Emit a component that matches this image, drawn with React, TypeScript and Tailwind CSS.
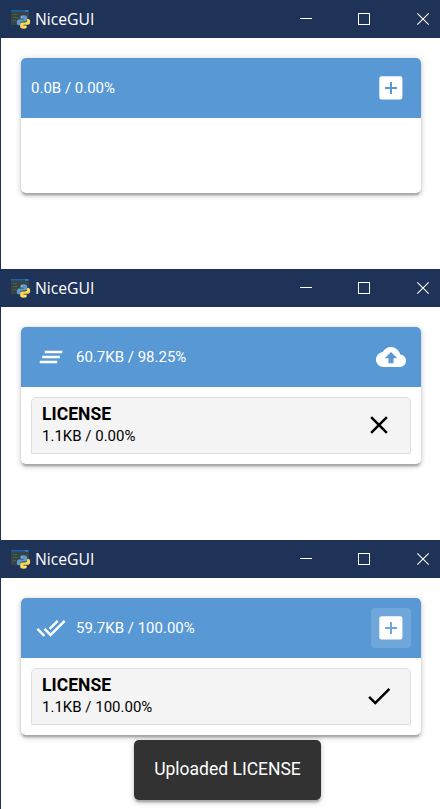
import type { ReactNode } from 'react';
import { MdClear, MdClearAll, MdCloudUpload, MdDone, MdDoneAll } from 'react-icons/md';

function AppIcon() {
  return (
    <svg width="20" height="20" viewBox="0 0 20 20" className="block shrink-0">
      <rect x="0" y="1" width="18" height="15" fill="#3b4245" />
      <rect x="0" y="1" width="18" height="1.500" fill="#0967b1" />
      <path d="M14 2h3" stroke="#5b9bd0" strokeWidth="0.8" />
      <path d="M2 5.500h4M2 8.500h5M2 11.500h3" stroke="#356b42" strokeWidth="1" />
      <path
        d="M12.400 6.300c-2.700 0-3 .9-3 2v1.400h3.300v.7H8.100c-1.400 0-2.300 1-2.300 3s.8 2.900 2 2.900h1.400v-1.700c0-1.200 1-2.100 2.100-2.100h3.100c1 0 1.700-.8 1.700-1.700V8.300c0-1.200-1.100-2-3.700-2z"
        fill="#5b9bcd"
      />
      <path
        d="M12.700 19.800c2.700 0 3-.9 3-2v-1.400h-3.300v-.7h4.600c1.400 0 2.200-1 2.200-3s-.8-2.700-2-2.700h-1.100v1.600c0 1.200-.9 2-2 2h-3.100c-1 0-1.800.8-1.800 1.800v2.400c0 1.200 1 2 3.500 2z"
        fill="#fddc55"
      />
      <circle cx="10.900" cy="8" r="0.500" fill="#fff" />
      <circle cx="14.200" cy="18" r="0.500" fill="#fff" />
    </svg>
  );
}

function AddBoxIcon() {
  return (
    <svg width="30" height="30" viewBox="0 0 30 30" className="block">
      <path
        fill="currentColor"
        fillRule="evenodd"
        d="M5.500 3.300h18.700a2.200 2.200 0 0 1 2.200 2.200v18.700a2.200 2.200 0 0 1-2.200 2.200H5.500a2.200 2.200 0 0 1-2.200-2.200V5.500a2.200 2.200 0 0 1 2.200-2.200zM14 9v5H9v2h5v5h2v-5h5v-2h-5V9z"
      />
    </svg>
  );
}

function TitleBar() {
  return (
    <div className="flex h-[38px] items-center bg-[#1f3258] pl-[11px] text-white">
      <AppIcon />
      <span className="ml-1 font-['Open_Sans','Noto_Sans',sans-serif] text-[15.700px] leading-5">NiceGUI</span>
      <svg width="130" height="14" viewBox="0 0 130 14" fill="none" stroke="#fff" className="ml-auto mr-[10px] shrink-0">
        <path d="M0 6.500h12" shapeRendering="crispEdges" />
        <rect x="58.500" y="1.500" width="11" height="11" shapeRendering="crispEdges" />
        <path d="M117.300 1.300l11.400 11.400M128.700 1.300L117.300 12.700" strokeWidth="1.100" />
      </svg>
    </div>
  );
}

function Uploader({ lead, label, action, children }: { lead?: ReactNode; label: string; action: ReactNode; children: ReactNode }) {
  return (
    <div className="w-[400px] overflow-hidden rounded-[5px] bg-white shadow-[0_1.25px_6.25px_rgba(0,0,0,0.2),0_2.5px_2.5px_rgba(0,0,0,0.14),0_3.75px_1.25px_-2.5px_rgba(0,0,0,0.12)]">
      <div className="flex h-[60px] items-center bg-[#5898d4] px-[10px] text-white">
        {lead && <div className="mr-[5px] flex size-10 items-center justify-center">{lead}</div>}
        <span className="flex-1 text-[15px] leading-[22.5px]">{label}</span>
        {action}
      </div>
      {children}
    </div>
  );
}

function FileRow({ status, icon }: { status: string; icon: ReactNode }) {
  return (
    <div className="p-[10px]">
      <div className="flex h-[57px] items-center rounded-t-[5px] border border-[#dedede] bg-[#f4f4f4] pb-px pl-[10px] pr-[11px] text-black">
        <div className="flex-1">
          <div className="text-[17.500px] font-bold leading-[23px] tracking-[0.040px]">LICENSE</div>
          <div className="text-[15px] leading-[21px]">{status}</div>
        </div>
        <div className="flex size-10 items-center justify-center">{icon}</div>
      </div>
    </div>
  );
}

function AppWindow({ children }: { children: ReactNode }) {
  return (
    <section className="h-[271px] shrink-0">
      <TitleBar />
      <div className="h-[233px] border-l border-[#1f3258] bg-white px-5 pt-5">{children}</div>
    </section>
  );
}

export default function App() {
  return (
    <main className="relative flex h-[809px] w-[440px] flex-col overflow-hidden bg-white font-[Roboto,sans-serif]">
      <section className="h-[269px] shrink-0">
        <TitleBar />
        <div className="h-[231px] border-l border-[#1f3258] px-5 pt-5">
          <Uploader label="0.0B / 0.00%" action={<div className="flex size-10 items-center justify-center"><AddBoxIcon /></div>}>
            <div className="h-[75px]" />
          </Uploader>
        </div>
      </section>
      <AppWindow>
        <Uploader
          lead={<MdClearAll size={30} />}
          label="60.7KB / 98.25%"
          action={<div className="flex size-10 items-center justify-center"><MdCloudUpload size={30} /></div>}
        >
          <FileRow status="1.1KB / 0.00%" icon={<MdClear size={30} />} />
        </Uploader>
      </AppWindow>
      <AppWindow>
        <Uploader
          lead={<MdDoneAll size={30} />}
          label="59.7KB / 100.00%"
          action={<div className="flex size-10 items-center justify-center rounded-[4px] bg-white/15"><AddBoxIcon /></div>}
        >
          <FileRow status="1.1KB / 100.00%" icon={<MdDone size={30} />} />
        </Uploader>
      </AppWindow>
      <div className="absolute left-[134px] top-[740px] flex h-[60px] w-[187px] items-center justify-center rounded-[5px] bg-[#323232] pb-px text-[17.500px] text-white shadow-[0_1.25px_6.25px_rgba(0,0,0,0.2),0_2.5px_2.5px_rgba(0,0,0,0.14),0_3.75px_1.25px_-2.5px_rgba(0,0,0,0.12)]">
        <span className="whitespace-nowrap">Uploaded LICENSE</span>
      </div>
    </main>
  );
}
